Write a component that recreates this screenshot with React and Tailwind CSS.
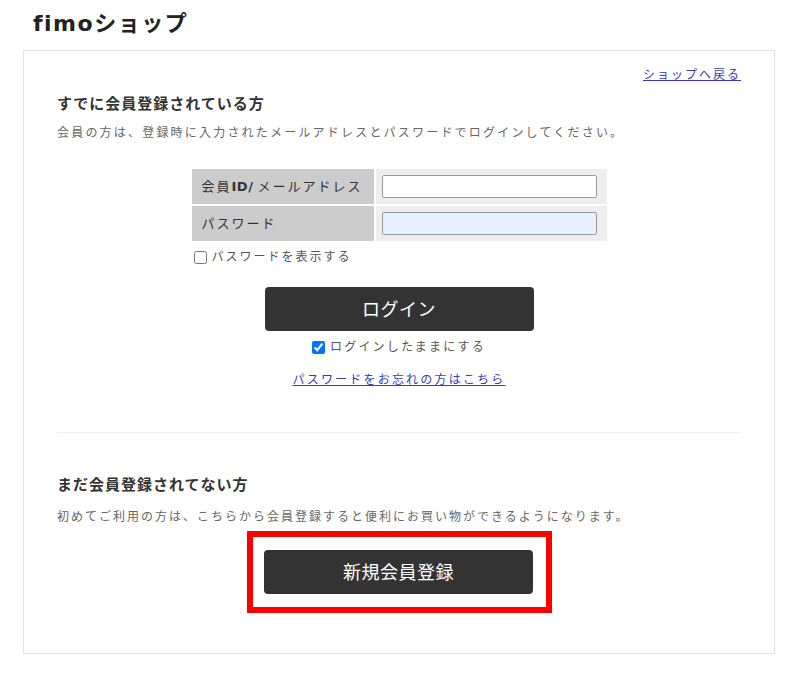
export default function App() {
  const jp = "font-['DejaVu_Sans','Noto_Sans_CJK_JP',sans-serif]";
  return (
    <div className={`w-[800px] h-[677px] bg-white text-[#333] ${jp}`}>
      <h1 className="h-[50px] pl-[33px] pt-[9px] text-[22px] leading-[30px] font-bold tracking-[1.5px] text-[#222]">
        fimoショップ
      </h1>
      <div className="ml-[23px] w-[752px] h-[604px] border border-[#e3e3e3] px-[33px] pt-[15px] flex flex-col">
        <div className="flex justify-end h-[18px]">
          <a href="#" className="text-[12px] leading-[18px] tracking-[2px] underline text-[#3a3ab8]">
            ショップへ戻る
          </a>
        </div>
        <h2 className="mt-[10px] text-[15px] leading-[20px] font-bold tracking-[1px] text-[#333]">
          すでに会員登録されている方
        </h2>
        <p className="mt-[10px] text-[12px] leading-[18px] tracking-[2.2px] text-[#666]">
          会員の方は、登録時に入力されたメールアドレスとパスワードでログインしてください。
        </p>
        <div className="mt-[27px] mx-auto w-[415px]">
          <div className="grid grid-cols-[182px_231px] gap-[2px]">
            <div className="h-[35px] bg-[#cccccc] flex items-center pl-[10px] text-[13px] tracking-[2px] text-[#333]">
              会員<span className="font-bold tracking-[0.5px] mr-[4px]">ID/</span>メールアドレス
            </div>
            <div className="h-[35px] bg-[#eeeeee] flex items-center pl-[6px]">
              <input type="text" className="w-[215px] h-[23px] bg-white border border-[#9a9a9a] rounded-[2px]" />
            </div>
            <div className="h-[35px] bg-[#cccccc] flex items-center pl-[10px] text-[13px] tracking-[2px] text-[#333]">
              パスワード
            </div>
            <div className="h-[35px] bg-[#eeeeee] flex items-center pl-[6px]">
              <input type="password" className="w-[215px] h-[23px] bg-[#e8f0fe] border border-[#9a9a9a] rounded-[2px]" />
            </div>
          </div>
          <label className="mt-[7px] flex items-center h-[18px] pl-[2px] text-[12px] tracking-[2px] text-[#555]">
            <input type="checkbox" className="w-[13px] h-[13px] m-0 mr-[5px]" />
            パスワードを表示する
          </label>
        </div>
        <button className="mt-[21px] mx-auto w-[269px] h-[44px] bg-[#333333] rounded-[4px] text-white text-[18px] tracking-[0.5px]">
          ログイン
        </button>
        <label className="mt-[7px] mx-auto flex items-center h-[18px] text-[12px] tracking-[2.2px] text-[#555]">
          <input type="checkbox" defaultChecked className="w-[13px] h-[13px] m-0 mr-[5px] accent-[#0075ff]" />
          ログインしたままにする
        </label>
        <a href="#" className="mt-[15px] mx-auto text-[12px] leading-[18px] tracking-[2.2px] underline text-[#3a3ab8]">
          パスワードをお忘れの方はこちら
        </a>
        <div className="mt-[43px] h-px bg-[#eeeeee]" />
        <h2 className="mt-[42px] text-[15px] leading-[20px] font-bold tracking-[1px] text-[#333]">
          まだ会員登録されてない方
        </h2>
        <p className="mt-[13px] text-[12px] leading-[18px] tracking-[2px] text-[#666]">
          初めてご利用の方は、こちらから会員登録すると便利にお買い物ができるようになります。
        </p>
        <div className="mt-[5px] ml-[190px] w-[305px] h-[82px] border-[6px] border-[#ff0000] flex items-center justify-center pr-[2px]">
          <button className="w-[269px] h-[44px] bg-[#333333] rounded-[4px] text-white text-[18px] tracking-[0.5px]">
            新規会員登録
          </button>
        </div>
      </div>
    </div>
  );
}
